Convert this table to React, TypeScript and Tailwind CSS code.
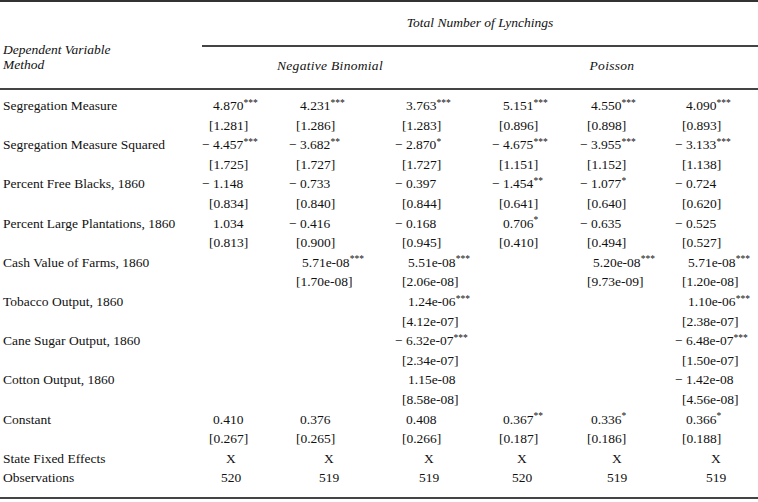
import React from 'react';

type Row = {
  label: string;
  coef: string[];
  se: string[];
};

const rows: Row[] = [
  {
    label: 'Segregation Measure',
    coef: ['4.870***', '4.231***', '3.763***', '5.151***', '4.550***', '4.090***'],
    se: ['[1.281]', '[1.286]', '[1.283]', '[0.896]', '[0.898]', '[0.893]'],
  },
  {
    label: 'Segregation Measure Squared',
    coef: ['− 4.457***', '− 3.682**', '− 2.870*', '− 4.675***', '− 3.955***', '− 3.133***'],
    se: ['[1.725]', '[1.727]', '[1.727]', '[1.151]', '[1.152]', '[1.138]'],
  },
  {
    label: 'Percent Free Blacks, 1860',
    coef: ['− 1.148', '− 0.733', '− 0.397', '− 1.454**', '− 1.077*', '− 0.724'],
    se: ['[0.834]', '[0.840]', '[0.844]', '[0.641]', '[0.640]', '[0.620]'],
  },
  {
    label: 'Percent Large Plantations, 1860',
    coef: ['1.034', '− 0.416', '− 0.168', '0.706*', '− 0.635', '− 0.525'],
    se: ['[0.813]', '[0.900]', '[0.945]', '[0.410]', '[0.494]', '[0.527]'],
  },
  {
    label: 'Cash Value of Farms, 1860',
    coef: ['', '5.71e-08***', '5.51e-08***', '', '5.20e-08***', '5.71e-08***'],
    se: ['', '[1.70e-08]', '[2.06e-08]', '', '[9.73e-09]', '[1.20e-08]'],
  },
  {
    label: 'Tobacco Output, 1860',
    coef: ['', '', '1.24e-06***', '', '', '1.10e-06***'],
    se: ['', '', '[4.12e-07]', '', '', '[2.38e-07]'],
  },
  {
    label: 'Cane Sugar Output, 1860',
    coef: ['', '', '− 6.32e-07***', '', '', '− 6.48e-07***'],
    se: ['', '', '[2.34e-07]', '', '', '[1.50e-07]'],
  },
  {
    label: 'Cotton Output, 1860',
    coef: ['', '', '1.15e-08', '', '', '− 1.42e-08'],
    se: ['', '', '[8.58e-08]', '', '', '[4.56e-08]'],
  },
  {
    label: 'Constant',
    coef: ['0.410', '0.376', '0.408', '0.367**', '0.336*', '0.366*'],
    se: ['[0.267]', '[0.265]', '[0.266]', '[0.187]', '[0.186]', '[0.188]'],
  },
];

const observations = ['520', '519', '519', '520', '519', '519'];

// indentation of the X / observation counts inside each column
const xIndent = ['pl-[24px]', 'pl-[35px]', 'pl-[29px]', 'pl-[25px]', 'pl-[32px]', 'pl-[36px]'];
const obsIndent = ['pl-[19px]', 'pl-[30px]', 'pl-[24px]', 'pl-[20px]', 'pl-[27px]', 'pl-[31px]'];

const gridCols = 'grid grid-cols-[202px_87px_106px_97px_88px_95px_83px]';

function Cell({ value }: { value: string }) {
  if (!value) return <div />;
  const m = value.match(/^(.*?)(\*+)?$/);
  const base = m ? m[1] : value;
  const stars = m && m[2] ? m[2] : '';

  let indent = 'pl-[11px]';
  if (base.startsWith('−')) indent = 'pl-0';
  else if (base.startsWith('[')) indent = 'pl-[7px]';
  else if (base.includes('e-')) indent = 'pl-[13px]';

  return (
    <div className={`whitespace-nowrap ${indent}`}>
      {base}
      {stars && <sup className="text-[9.5px] top-[-0.45em]">{stars}</sup>}
    </div>
  );
}

export default function App() {
  return (
    <div className="w-[758px] h-[502px] bg-white text-[#111] font-['Liberation_Serif',serif] text-[13.5px] overflow-hidden">
      {/* top rule */}
      <div className="h-[2px] bg-[#333]" />

      {/* Header */}
      <div className="flex h-[86px]">
        <div className="w-[202px] pt-[40px] pl-[3px] italic leading-[15px]">
          <div>Dependent Variable</div>
          <div>Method</div>
        </div>
        <div className="flex-1 flex flex-col">
          <div className="h-[43px] flex items-center justify-center italic">
            Total Number of Lynchings
          </div>
          <div className="h-[1.5px] bg-[#444]" />
          <div className="grid grid-cols-[256px_8px_292px] pt-[11px] italic leading-[15px]">
            <div className="text-center tracking-[0.3px]">Negative Binomial</div>
            <div />
            <div className="text-center tracking-[0.3px]">Poisson</div>
          </div>
        </div>
      </div>

      {/* rule under header */}
      <div className="h-[2px] bg-[#444]" />

      {/* Body */}
      <div className={`${gridCols} pt-[6px] leading-[19.6px]`}>
        {rows.map((r) => (
          <React.Fragment key={r.label}>
            <div className="pl-[3px] whitespace-nowrap">{r.label}</div>
            {r.coef.map((v, i) => (
              <Cell key={`c${i}`} value={v} />
            ))}
            <div />
            {r.se.map((v, i) => (
              <Cell key={`s${i}`} value={v} />
            ))}
          </React.Fragment>
        ))}
        <div className="pl-[3px]">State Fixed Effects</div>
        {xIndent.map((c, i) => (
          <div key={`x${i}`} className={c}>
            X
          </div>
        ))}
        <div className="pl-[3px]">Observations</div>
        {observations.map((o, i) => (
          <div key={`o${i}`} className={obsIndent[i]}>
            {o}
          </div>
        ))}
      </div>

      {/* bottom rule */}
      <div className="mt-[9px] h-[2px] bg-[#444]" />
    </div>
  );
}
